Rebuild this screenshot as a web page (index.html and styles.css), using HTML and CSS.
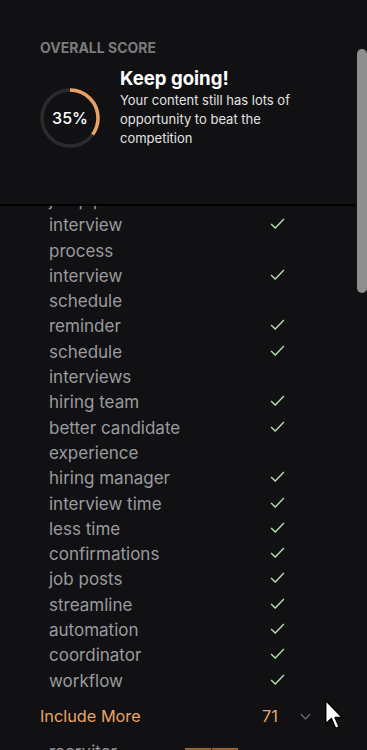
FILE: index.html
```html
<!DOCTYPE html>
<html lang="en">
<head>
<meta charset="utf-8">
<title>Overall score</title>
<link rel="stylesheet" href="styles.css">
</head>
<body>
<div class="panel">
  <header class="header">
    <div class="label">OVERALL SCORE</div>
    <div class="score-row">
      <div class="ring">
        <svg width="62" height="62" viewBox="0 0 62 62">
          <circle cx="31" cy="31" r="28" fill="none" stroke="#2b2b2e" stroke-width="3.5"/>
          <circle cx="31" cy="31" r="28" fill="none" stroke="#e9a261" stroke-width="3.5" stroke-dasharray="61.58 200" transform="rotate(-90 31 31)"/>
        </svg>
        <span class="ring-value">35%</span>
      </div>
      <div class="score-text">
        <div class="title">Keep going!</div>
        <p class="desc">Your content still has lots of opportunity to beat the competition</p>
      </div>
    </div>
  </header>
  <div class="scroll-area">
    <div class="content">
      <div class="kw"><span class="name">job pipeline</span><span></span><span class="check"></span></div>
      <div class="kw"><span class="name">interview process</span><span></span><span class="check"><svg viewBox="0 0 16 12"><polyline points="1,6.5 5.5,11 15,1"/></svg></span></div>
      <div class="kw"><span class="name">interview schedule</span><span></span><span class="check"><svg viewBox="0 0 16 12"><polyline points="1,6.5 5.5,11 15,1"/></svg></span></div>
      <div class="kw"><span class="name">reminder</span><span></span><span class="check"><svg viewBox="0 0 16 12"><polyline points="1,6.5 5.5,11 15,1"/></svg></span></div>
      <div class="kw"><span class="name">schedule interviews</span><span></span><span class="check"><svg viewBox="0 0 16 12"><polyline points="1,6.5 5.5,11 15,1"/></svg></span></div>
      <div class="kw"><span class="name">hiring team</span><span></span><span class="check"><svg viewBox="0 0 16 12"><polyline points="1,6.5 5.5,11 15,1"/></svg></span></div>
      <div class="kw"><span class="name">better candidate experience</span><span></span><span class="check"><svg viewBox="0 0 16 12"><polyline points="1,6.5 5.5,11 15,1"/></svg></span></div>
      <div class="kw"><span class="name">hiring manager</span><span></span><span class="check"><svg viewBox="0 0 16 12"><polyline points="1,6.5 5.5,11 15,1"/></svg></span></div>
      <div class="kw"><span class="name">interview time</span><span></span><span class="check"><svg viewBox="0 0 16 12"><polyline points="1,6.5 5.5,11 15,1"/></svg></span></div>
      <div class="kw"><span class="name">less time</span><span></span><span class="check"><svg viewBox="0 0 16 12"><polyline points="1,6.5 5.5,11 15,1"/></svg></span></div>
      <div class="kw"><span class="name">confirmations</span><span></span><span class="check"><svg viewBox="0 0 16 12"><polyline points="1,6.5 5.5,11 15,1"/></svg></span></div>
      <div class="kw"><span class="name">job posts</span><span></span><span class="check"><svg viewBox="0 0 16 12"><polyline points="1,6.5 5.5,11 15,1"/></svg></span></div>
      <div class="kw"><span class="name">streamline</span><span></span><span class="check"><svg viewBox="0 0 16 12"><polyline points="1,6.5 5.5,11 15,1"/></svg></span></div>
      <div class="kw"><span class="name">automation</span><span></span><span class="check"><svg viewBox="0 0 16 12"><polyline points="1,6.5 5.5,11 15,1"/></svg></span></div>
      <div class="kw"><span class="name">coordinator</span><span></span><span class="check"><svg viewBox="0 0 16 12"><polyline points="1,6.5 5.5,11 15,1"/></svg></span></div>
      <div class="kw"><span class="name">workflow</span><span></span><span class="check"><svg viewBox="0 0 16 12"><polyline points="1,6.5 5.5,11 15,1"/></svg></span></div>

      <div class="include">
        <span class="include-label">Include More</span>
        <span class="include-count">71</span>
        <span class="chev"><svg viewBox="0 0 12 7"><polyline points="1,1 6,6 11,1"/></svg></span>
      </div>

      <div class="kw more"><span class="name">recruiter</span><span class="btns"><span class="btn"></span><span class="btn"></span></span><span></span></div>
    </div>
  </div>
  <div class="scrollbar"></div>
  <svg class="cursor" width="21" height="33" viewBox="0 0 20 32">
    <path d="M1.5 1.5 L1.5 24 L7 19 L11 28.5 L14.5 27 L10.5 18 L17.5 18 Z" fill="#fff" stroke="#000" stroke-width="1.4" stroke-linejoin="round"/>
  </svg>
</div>
</body>
</html>
```

FILE: styles.css
```css
* { box-sizing: border-box; }
html, body { margin: 0; padding: 0; }
body {
  background: #111113;
  font-family: Inter, "Noto Sans", "Liberation Sans", sans-serif;
  color: #e6e6e6;
}
.panel {
  position: relative;
  height: 750px;
  display: flex;
  flex-direction: column;
  overflow: hidden;
}
.header {
  height: 206px;
  flex: none;
  padding: 40px 0 0 40px;
  margin-right: 12px;
  border-bottom: 2px solid #000;
}
.label {
  font-size: 14px;
  font-weight: 700;
  color: #7b7b7e;
  line-height: 16px;
}
.score-row {
  display: flex;
  align-items: flex-start;
  margin-top: 10px;
}
.ring {
  position: relative;
  width: 62px;
  height: 62px;
  margin-top: 21px;
  margin-left: -1px;
  flex: none;
}
.ring svg { display: block; }
.ring-value {
  position: absolute;
  inset: 0;
  display: flex;
  align-items: center;
  justify-content: center;
  font-size: 16px;
  font-weight: 500;
  color: #fff;
}
.score-text {
  margin-left: 19px;
}
.title {
  font-size: 18.6px;
  font-weight: 700;
  color: #fff;
  line-height: 24px;
}
.desc {
  margin: 1px 0 0;
  font-size: 13px;
  line-height: 19px;
  color: #e2e2e2;
  width: 190px;
}
.scroll-area {
  flex: 1;
  overflow: hidden;
}
.content {
  margin-top: -18px;
}
.kw {
  display: grid;
  grid-template-columns: 136px 85px 16px;
  padding-left: 49px;
  font-size: 17px;
  line-height: 25.3px;
  color: #9b9b9e;
}
.check svg {
  display: block;
  width: 15px;
  height: 11px;
  margin-top: 5px;
  fill: none;
  stroke: #b3dfae;
  stroke-width: 1.5;
}
.include {
  display: grid;
  grid-template-columns: 222px 38px 12px;
  align-items: center;
  padding-left: 40px;
  margin-top: 10px;
  font-size: 16.3px;
  line-height: 25.3px;
  color: #e9a466;
}
.chev svg {
  display: block;
  width: 11px;
  height: 7px;
  fill: none;
  stroke: #6c6c70;
  stroke-width: 1.3;
}
.more {
  margin-top: 11px;
}
.btns {
  display: flex;
  gap: 1px;
  padding-top: 8px;
}
.btn {
  width: 26px;
  height: 20px;
  background: #7c5531;
  border: 1px solid #a06c3c;
}
.scrollbar {
  position: absolute;
  left: 357px;
  top: 49px;
  width: 10px;
  height: 244px;
  border-radius: 5px;
  background: #8f8f90;
}
.cursor {
  position: absolute;
  left: 324px;
  top: 699px;
}
```
